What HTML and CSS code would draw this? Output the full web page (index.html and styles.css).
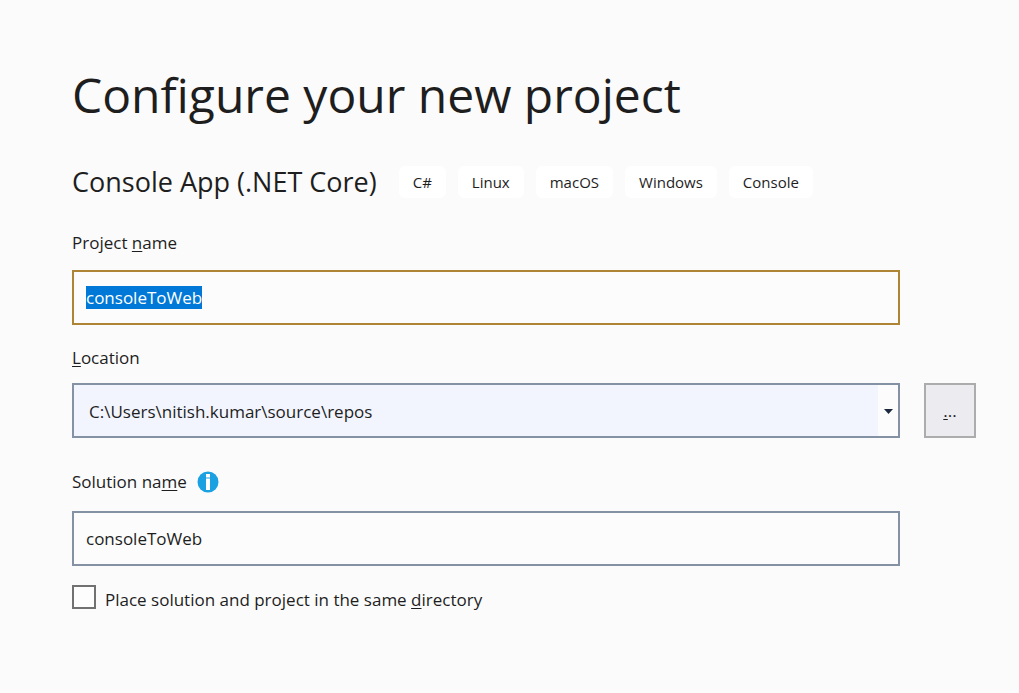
FILE: index.html
```html
<!DOCTYPE html>
<html lang="en">
<head>
<meta charset="utf-8">
<title>Configure your new project</title>
<link rel="stylesheet" href="styles.css">
</head>
<body>
<main class="page">
  <h1 class="title">Configure your new project</h1>
  <div class="template">
    <h2 class="template-name">Console App (.NET Core)</h2>
    <ul class="tags">
      <li class="tag">C#</li>
      <li class="tag">Linux</li>
      <li class="tag">macOS</li>
      <li class="tag">Windows</li>
      <li class="tag">Console</li>
    </ul>
  </div>
  <form class="form">
    <label class="label" for="project">Project <span class="key">n</span>ame</label>
    <input class="field field-active" id="project" type="text" value="consoleToWeb" spellcheck="false" autofocus>

    <label class="label label-location" for="location"><span class="key">L</span>ocation</label>
    <div class="combo">
      <select class="field combo-select" id="location">
        <option>C:\Users\nitish.kumar\source\repos</option>
      </select>
      <svg class="combo-arrow" width="9" height="5" viewBox="0 0 9 5" aria-hidden="true"><path d="M0 0h9L4.500 5z" fill="#1b293e"/></svg>
    </div>
    <button class="browse" type="button" aria-label="Browse"><span class="key">.</span>..</button>

    <div class="label label-solution">
      <label for="solution">Solution na<span class="key">m</span>e</label>
      <svg class="info" width="22" height="22" viewBox="0 0 22 22" aria-hidden="true">
        <circle cx="11" cy="11" r="10.500" fill="#1ba1e2"/>
        <path d="M9 3h4v3.500H9zM9 7.500h4V19H9z" fill="#fff"/>
      </svg>
    </div>
    <input class="field" id="solution" type="text" value="consoleToWeb" spellcheck="false">

    <div class="check">
      <input class="box" id="same" type="checkbox">
      <label class="check-label" for="same">Place solution and project in the same <span class="key">d</span>irectory</label>
    </div>
  </form>
</main>
<script src="main.js"></script>
</body>
</html>
```
FILE: styles.css
```css
* {
  box-sizing: border-box;
}

body {
  margin: 0;
  background: #fbfbfb;
  color: #1e1e1e;
  font: 17px/24px "Segoe UI", "Open Sans", "Noto Sans", sans-serif;
}

.page {
  padding: 59px 43px 40px 72px;
}

.title {
  margin: 0;
  font-size: 48px;
  font-weight: 400;
  line-height: 72px;
}

.template {
  display: flex;
  align-items: center;
  gap: 22px;
  margin-top: 32px;
}

.template-name {
  margin: 0;
  font-size: 27px;
  font-weight: 400;
  line-height: 37px;
  white-space: nowrap;
}

.tags {
  display: flex;
  gap: 12px;
  margin: 0;
  padding: 0;
  list-style: none;
}

.tag {
  padding: 4px 14px;
  border-radius: 6px;
  background: #fff;
  font-size: 15px;
}

.form {
  display: grid;
  grid-template-columns: 1fr 52px;
  column-gap: 24px;
  margin-top: 31px;
}

.label {
  grid-column: 1 / -1;
  margin-bottom: 15px;
}

.label-location {
  margin: 21px 0 13px;
}

.label-solution {
  display: flex;
  align-items: center;
  gap: 10px;
  margin: 32px 0 17px;
}

.key {
  text-decoration: underline;
  text-decoration-thickness: 1px;
  text-decoration-skip-ink: none;
  text-underline-offset: 2px;
}

.field {
  grid-column: 1;
  width: 100%;
  height: 55px;
  padding: 0 12px;
  border: 2px solid #8591a5;
  border-radius: 0;
  outline: none;
  background: #fcfcfc;
  color: inherit;
  font: inherit;
}

.field-active {
  border-color: #ad8535;
}

.field::selection {
  background: #0078d7;
  color: #fff;
}

.combo {
  display: grid;
  align-items: center;
}

.combo-select {
  grid-area: 1 / 1;
  appearance: none;
  padding: 2px 36px 0 15px;
  background: linear-gradient(to left, #fcfcfc 20px, #f2f5fe 20px);
}

.combo-arrow {
  grid-area: 1 / 1;
  justify-self: end;
  margin: 2px 7px 0 0;
  pointer-events: none;
}

.browse {
  padding: 0;
  border: 2px solid #acacac;
  background: #ecebf0;
  color: inherit;
  font: inherit;
}

.info {
  flex: none;
}

.check {
  grid-column: 1 / -1;
  display: flex;
  align-items: flex-start;
  gap: 9px;
  margin-top: 19px;
}

.check-label {
  padding-top: 3px;
}

.box {
  flex: none;
  appearance: none;
  width: 24px;
  height: 24px;
  margin: 0;
  border: 2px solid #717171;
  background: #fdfdfd;
}

.box:checked {
  background: #717171;
}
```
FILE: main.js
```js
const project = document.getElementById("project");
project.focus();
project.select();
```
